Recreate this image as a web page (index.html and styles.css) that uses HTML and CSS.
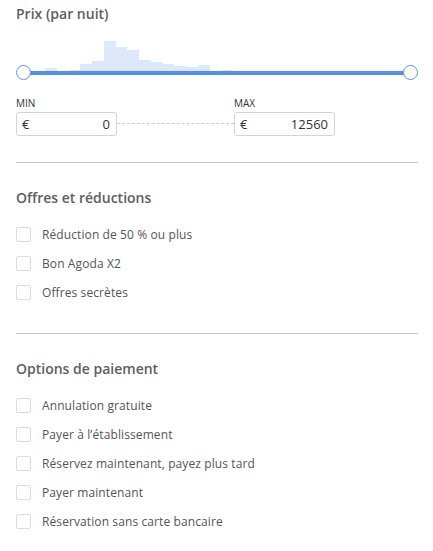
FILE: index.html
```html
<!DOCTYPE html>
<html>
<head>
<meta charset="utf-8">
<link rel="stylesheet" href="styles.css">
</head>
<body>
<div class="panel">
  <section class="price">
    <h3 class="title">Prix (par nuit)</h3>
    <div class="histo">
      <span class="bar" style="height:0px"></span>
      <span class="bar" style="height:0px"></span>
      <span class="bar" style="height:3px"></span>
      <span class="bar" style="height:0px"></span>
      <span class="bar" style="height:1px"></span>
      <span class="bar" style="height:7px"></span>
      <span class="bar" style="height:10px"></span>
      <span class="bar" style="height:30px"></span>
      <span class="bar" style="height:24px"></span>
      <span class="bar" style="height:21px"></span>
      <span class="bar" style="height:11px"></span>
      <span class="bar" style="height:9px"></span>
      <span class="bar" style="height:7px"></span>
      <span class="bar" style="height:5px"></span>
      <span class="bar" style="height:4px"></span>
      <span class="bar" style="height:6px"></span>
      <span class="bar" style="height:0px"></span>
      <span class="bar" style="height:1px"></span>
    </div>
    <div class="slider">
      <span class="thumb"></span>
      <span class="track"></span>
      <span class="thumb"></span>
    </div>
    <div class="range">
      <div class="field">
        <label class="flabel">MIN</label>
        <div class="box"><span>€</span><span>0</span></div>
      </div>
      <div class="dash"></div>
      <div class="field">
        <label class="flabel">MAX</label>
        <div class="box"><span>€</span><span>12560</span></div>
      </div>
    </div>
  </section>
  <hr class="divider">
  <section class="group">
    <h3 class="title">Offres et réductions</h3>
    <ul class="list">
      <li class="row"><span class="check"></span>Réduction de 50 % ou plus</li>
      <li class="row"><span class="check"></span>Bon Agoda X2</li>
      <li class="row"><span class="check"></span>Offres secrètes</li>
    </ul>
  </section>
  <hr class="divider">
  <section class="group">
    <h3 class="title">Options de paiement</h3>
    <ul class="list">
      <li class="row"><span class="check"></span>Annulation gratuite</li>
      <li class="row"><span class="check"></span>Payer à l’établissement</li>
      <li class="row"><span class="check"></span>Réservez maintenant, payez plus tard</li>
      <li class="row"><span class="check"></span>Payer maintenant</li>
      <li class="row"><span class="check"></span>Réservation sans carte bancaire</li>
    </ul>
  </section>
</div>
</body>
</html>
```
FILE: styles.css
```css
* { box-sizing: border-box; }
html, body { margin: 0; padding: 0; background: #fff; }
body {
  font-family: "Open Sans", "Noto Sans", sans-serif;
  color: #555;
}
.panel { padding: 0 15px 0 16px; }
.title {
  margin: 0;
  font-size: 14px;
  font-weight: 600;
  color: #5e5e5e;
  line-height: 18px;
}
.price { padding-top: 5px; }
.histo {
  display: flex;
  align-items: flex-end;
  height: 30px;
  margin: 18px 0 0 5.5px;
}
.bar {
  width: 11.75px;
  flex: none;
  background: #dde9fb;
}
.slider {
  display: flex;
  align-items: center;
  height: 15px;
  margin-top: -6px;
  position: relative;
}
.track {
  flex: 1;
  height: 4px;
  background: #4f8ff2;
  margin: 0 -1px;
}
.thumb {
  width: 15px;
  height: 15px;
  flex: none;
  border-radius: 50%;
  border: 1.5px solid #5b95ee;
  background: #fff;
  position: relative;
  z-index: 1;
}
.range {
  display: flex;
  align-items: flex-end;
  margin-top: 16px;
}
.field { display: flex; flex-direction: column; }
.flabel {
  font-size: 10px;
  line-height: 14px;
  color: #333;
  margin-bottom: 2px;
}
.box {
  width: 101px;
  height: 24px;
  border: 1px solid #d4d4d4;
  border-radius: 3px;
  display: flex;
  justify-content: space-between;
  align-items: center;
  padding: 0 6px 0 5px;
  font-size: 13px;
  color: #333;
}
.dash {
  flex: none;
  width: 117px;
  border-top: 1px dashed #ccc;
  margin-bottom: 12px;
}
.divider {
  border: 0;
  border-top: 1px solid #c4c4c6;
  margin: 26px 0 0 0;
  width: 402px;
}
.group { padding-top: 26px; }
.list { list-style: none; margin: 0; padding: 13px 0 0 0; }
.row {
  display: flex;
  align-items: center;
  height: 29px;
  font-size: 12px;
  letter-spacing: 0.1px;
  color: #555;
}
.check {
  width: 15px;
  height: 15px;
  border: 1px solid #dcdcdc;
  border-radius: 2px;
  margin-right: 11px;
  flex: none;
}
```
